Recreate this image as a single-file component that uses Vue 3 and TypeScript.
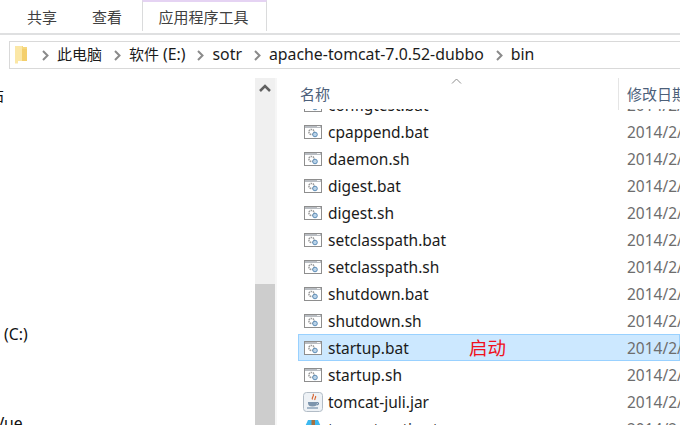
<script setup lang="ts">
interface Crumb { cjk?: string; latin?: string }
const crumbs: Crumb[] = [
  { cjk: '此电脑' },
  { cjk: '软件 ', latin: '(E:)' },
  { latin: 'sotr' },
  { latin: 'apache-tomcat-7.0.52-dubbo' },
  { latin: 'bin' },
]
interface FileRow { name: string; kind: 'bat' | 'jar' | 'rar'; note?: string; selected?: boolean }
const files: FileRow[] = [
  { name: 'configtest.bat', kind: 'bat' },
  { name: 'cpappend.bat', kind: 'bat' },
  { name: 'daemon.sh', kind: 'bat' },
  { name: 'digest.bat', kind: 'bat' },
  { name: 'digest.sh', kind: 'bat' },
  { name: 'setclasspath.bat', kind: 'bat' },
  { name: 'setclasspath.sh', kind: 'bat' },
  { name: 'shutdown.bat', kind: 'bat' },
  { name: 'shutdown.sh', kind: 'bat' },
  { name: 'startup.bat', kind: 'bat', note: '启动', selected: true },
  { name: 'startup.sh', kind: 'bat' },
  { name: 'tomcat-juli.jar', kind: 'jar' },
  { name: 'tomcat-native.tar.gz', kind: 'rar' },
]
</script>

<template>
  <div class="page">
    <div class="ribbon">
      <span class="tab">共享</span>
      <span class="tab view">查看</span>
      <span class="tool-tab">应用程序工具</span>
    </div>

    <div class="address">
      <svg class="folder" width="13" height="20" viewBox="0 0 13 20">
        <path d="M0 1h8v1h4v14H3v2H0z" fill="#f6d77e" />
        <path d="M0 1h7v15H3v2.500H0z" fill="#fbe7a6" />
        <path d="M7 4h5v12H7z" fill="#f4cf6c" />
      </svg>
      <template v-for="(c, i) in crumbs" :key="i">
        <svg class="chev" width="7" height="11" viewBox="0 0 7 11">
          <path d="M1 1l4.500 4.500L1 10" fill="none" stroke="#8a8a8a" stroke-width="2" />
        </svg>
        <span class="crumb"><span v-if="c.cjk" class="cjk">{{ c.cjk }}</span><span v-if="c.latin">{{ c.latin }}</span></span>
      </template>
    </div>

    <div class="main">
      <div class="sidebar">
        <span class="side-item first">站</span>
        <span class="side-item drive">本地磁盘 (C:)</span>
        <span class="side-item vue">project-Vue</span>
      </div>

      <div class="scrollbar">
        <svg width="20" height="17" viewBox="0 0 20 17">
          <path d="M5 13l5-5 5 5" fill="none" stroke="#606060" stroke-width="2.500" />
        </svg>
        <div class="thumb"></div>
      </div>

      <div class="content">
        <div class="header">
          <svg class="sort" width="11" height="6" viewBox="0 0 11 6">
            <path d="M1 5.500l4.500-4.500 4.500 4.500" fill="none" stroke="#8d8d8d" stroke-width="1" />
          </svg>
          <span class="col-name">名称</span>
          <span class="col-date">修改日期</span>
        </div>

        <div class="list">
          <div v-for="f in files" :key="f.name" class="row" :class="{ selected: f.selected }">
            <span class="icon">
              <svg v-if="f.kind === 'bat'" width="18" height="14" viewBox="0 0 18 14">
                <rect x="0.500" y="0.500" width="17" height="13" fill="#fff" stroke="#8e8e8e" />
                <rect x="1" y="1" width="16" height="2" fill="#b9bdc2" />
                <rect x="13" y="1" width="3" height="1" fill="#f4f4f4" />
                <circle cx="7.500" cy="7" r="2.600" fill="none" stroke="#9a9a9a" stroke-width="1.500" stroke-dasharray="1.500 0.700" />
                <circle cx="11" cy="9.500" r="2.300" fill="#b9d2e8" stroke="#5f8fb8" stroke-width="1" />
              </svg>
              <svg v-else-if="f.kind === 'jar'" class="jar" width="20" height="20" viewBox="0 0 20 20">
                <rect x="0.500" y="0.500" width="19" height="19" rx="3" fill="#eef2f6" stroke="#b2bcc6" />
                <path d="M10 2c2 2-2 3-.5 5.500M12.500 4c1 1.500-1.500 2.500-.5 4" fill="none" stroke="#d8632f" stroke-width="1.200" />
                <path d="M5 10h9v1c0 2.500-1.500 3.500-4.500 3.500S5 13.500 5 11z" fill="#7d95ad" />
                <path d="M14 10.500c2 0 2 2.500-.5 2.500M4 16h11" fill="none" stroke="#5d7c9b" stroke-width="1.100" />
              </svg>
              <svg v-else class="rar" width="20" height="18" viewBox="0 0 20 18">
                <path d="M5 0h10l4 9H1z" fill="#3cb8f0" />
                <path d="M8.500 0h3.500v9H8.500z" fill="#a5703f" />
              </svg>
            </span>
            <span class="name">{{ f.name }}</span>
            <span class="note">{{ f.note }}</span>
            <span class="date">2014/2/11 10:41</span>
          </div>
        </div>
      </div>
    </div>
  </div>
</template>

<style>
html, body { margin: 0; background: #fff; }
</style>

<style scoped>
.page {
  width: 680px;
  height: 425px;
  overflow: hidden;
  display: flex;
  flex-direction: column;
  background: #fff;
  color: #1b1b1b;
  font-family: "Noto Sans", "Noto Sans CJK SC", sans-serif;
  font-size: 15px;
  line-height: 20px;
}
.ribbon {
  height: 33px;
  flex: none;
  display: flex;
  align-items: flex-start;
  padding-left: 27px;
  border-bottom: 2px solid #dfe0e1;
  color: #3f3f3f;
}
.tab { margin-top: 7px; }
.view { margin-left: 35px; }
.tool-tab {
  margin-left: 20px;
  width: 121px;
  height: 24px;
  padding: 5px 2px 0 0;
  text-align: center;
  border-top: 2px solid #e5d3f3;
  border-left: 1px solid #dadbdc;
  border-right: 1px solid #dadbdc;
}
.address {
  flex: none;
  height: 26px;
  margin: 6px 0 0 9px;
  border: 1px solid #d9d9d9;
  border-right: none;
  display: flex;
  align-items: center;
  padding-left: 5px;
}
.folder { margin-right: 14px; flex: none; }
.chev { flex: none; margin-right: 8px; }
.crumb {
  margin-right: 12px;
  white-space: nowrap;
  font-size: 15.85px;
  line-height: 20px;
  position: relative;
  top: -1px;
}
.cjk { font-size: 15px; }
.main {
  flex: 1;
  min-height: 0;
  margin-top: 9px;
  display: flex;
}
.sidebar {
  width: 255px;
  flex: none;
  overflow: hidden;
  display: flex;
  flex-direction: column;
  color: #111;
  font-size: 15.75px;
}
.side-item { white-space: nowrap; line-height: 20px; }
.first { margin-top: 7px; margin-left: -12px; }
.drive { margin-top: 219px; margin-left: -63px; }
.vue { margin-top: 69px; margin-left: -62px; }
.scrollbar {
  width: 20px;
  flex: none;
  background: #f0f0f0;
  display: flex;
  flex-direction: column;
}
.scrollbar svg { flex: none; }
.thumb {
  margin-top: auto;
  height: 141px;
  background: #cdcdcd;
}
.content {
  flex: 1;
  min-width: 0;
  border-left: 2px solid #f6f6f6;
  padding-left: 21px;
  display: flex;
  flex-direction: column;
}
.header {
  height: 31px;
  flex: none;
  position: relative;
  display: flex;
  align-items: flex-start;
  color: #4c607a;
  padding-left: 2px;
}
.sort { position: absolute; left: 153px; top: 0; }
.col-name { width: 318px; margin-top: 6px; flex: none; }
.col-date {
  white-space: nowrap;
  border-left: 1px solid #e5e5e5;
  height: 32px;
  line-height: 32px;
  padding-left: 8px;
  flex: none;
}
.list {
  flex: 1;
  min-height: 0;
  overflow: hidden;
  font-size: 15.5px;
}
.row {
  height: 27px;
  box-sizing: border-box;
  display: flex;
  align-items: center;
  border: 1px solid transparent;
  white-space: nowrap;
}
.row:first-child { margin-top: -18px; }
.selected {
  background: #cce8ff;
  border-color: #99d1ff;
}
.icon {
  width: 29px;
  flex: none;
  display: flex;
  padding-left: 5px;
  box-sizing: border-box;
}
.jar, .rar { margin-left: -1px; }
.name { width: 141px; flex: none; }
.note {
  width: 158px;
  flex: none;
  color: #f01020;
  font-size: 18.5px;
}
.date { color: #6d6d6d; }
</style>
